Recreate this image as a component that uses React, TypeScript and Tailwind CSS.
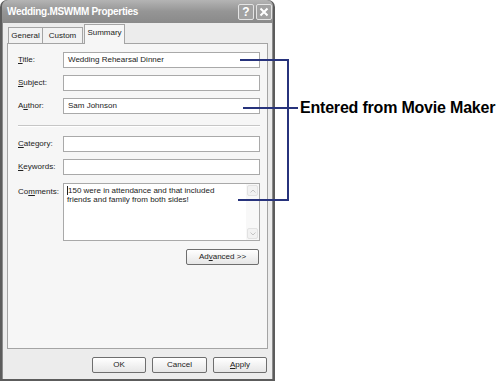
const FONT = "font-['Liberation_Sans',Arial,sans-serif]";

function Acc({ text, at }: { text: string; at: number }) {
  // label with an underlined accelerator letter
  return (
    <>
      {text.slice(0, at)}
      <span className="underline underline-offset-[1px]">{text[at]}</span>
      {text.slice(at + 1)}
    </>
  );
}

function Field({ label, at, value }: { label: string; at: number; value?: string }) {
  return (
    <div className="flex h-[16px] items-center">
      <div className="w-[45px] text-[8px] text-[#222]">
        <Acc text={label} at={at} />
      </div>
      <div className="flex h-[16px] flex-1 items-center border border-[#a9a9a9] bg-white pl-[4px] text-[8px] text-[#222]">
        {value}
      </div>
    </div>
  );
}

function WinButton({ children, className = "" }: { children: React.ReactNode; className?: string }) {
  return (
    <div
      className={`flex h-[16px] items-center justify-center rounded-[2px] border border-[#6e6e6e] bg-gradient-to-b from-white to-[#e6e6e6] text-[8px] text-[#222] ${className}`}
    >
      {children}
    </div>
  );
}

function Window() {
  return (
    <div className="flex h-[381px] w-[275px] shrink-0 flex-col rounded-t-[7px] bg-[#5c5c5c] px-[2px] pb-[2px]">
      {/* Title bar */}
      <div className="flex h-[23px] items-center rounded-t-[6px] bg-gradient-to-b from-[#b4b4b4] via-[#959595] to-[#8a8a8a] pl-[5px] pr-[1px]">
        <span className="flex-1 text-[10px] font-bold tracking-[-0.3px] text-white">Wedding.MSWMM Properties</span>
        <div className="flex gap-[2px]">
          <div className="flex h-[16px] w-[16px] items-center justify-center rounded-[2px] border border-[#e4e4e4] bg-[#a2a2a2] text-[12px] font-bold leading-none text-white">
            ?
          </div>
          <div className="flex h-[16px] w-[16px] items-center justify-center rounded-[2px] border border-[#e4e4e4] bg-[#a2a2a2]">
            <svg width="10" height="10" viewBox="0 0 10 10">
              <path d="M1.5 1.5 L8.5 8.5 M8.5 1.5 L1.5 8.5" stroke="white" strokeWidth="2" />
            </svg>
          </div>
        </div>
      </div>

      {/* Body */}
      <div className="flex flex-1 flex-col border-x border-[#8c8c8c] bg-[#ececec] px-[4px] pb-[5px]">
        {/* Tabs */}
        <div className="flex h-[20px] items-end pl-[1px] text-[8px] text-[#222]">
          <div className="flex h-[16px] w-[35px] items-center justify-center border border-b-0 border-[#a4a4a4] bg-[#f2f2f2]">General</div>
          <div className="flex h-[16px] w-[40px] items-center justify-center border border-b-0 border-l-0 border-[#a4a4a4] bg-[#f2f2f2]">Custom</div>
          <div className="relative z-10 -mb-px ml-px flex h-[20px] w-[41px] items-start justify-center border border-b-0 border-[#a4a4a4] bg-[#f6f6f6] pt-[2px]">
            Summary
          </div>
        </div>

        {/* Panel */}
        <div className="flex h-[306px] flex-col border border-[#a4a4a4] bg-[#f6f6f6] pl-[10px] pr-[7px] pt-[8px]">
          <div className="flex flex-col gap-[7px]">
            <Field label="Title:" at={0} value="Wedding Rehearsal Dinner" />
            <Field label="Subject:" at={0} />
            <Field label="Author:" at={1} value="Sam Johnson" />
          </div>
          <div className="mb-[9px] mt-[11px] h-[2px] border-t border-b border-t-[#c6c6c6] border-b-white" />
          <div className="flex flex-col gap-[7px]">
            <Field label="Category:" at={0} />
            <Field label="Keywords:" at={0} />
          </div>
          <div className="mt-[8px] flex">
            <div className="w-[45px] pt-[3px] text-[8px] text-[#222]">
              <Acc text="Comments:" at={2} />
            </div>
            <div className="flex h-[58px] flex-1 border border-[#a9a9a9] bg-white">
              <div className="flex-1 pl-[3px] pt-[2px] text-[8px] leading-[9px] text-[#222]">
                <span className="border-l border-[#222]">150 were in attendance and that included</span>
                <br />
                friends and family from both sides!
              </div>
              <div className="flex w-[13px] flex-col justify-between bg-[#f8f8f8] p-[1px]">
                <div className="flex h-[11px] items-center justify-center rounded-[2px] border border-[#e2e2e2] bg-[#f2f2f2]">
                  <svg width="6" height="4" viewBox="0 0 6 4">
                    <path d="M0.5 3.5 L3 1 L5.5 3.5" fill="none" stroke="#c4c4c4" strokeWidth="1" />
                  </svg>
                </div>
                <div className="flex h-[11px] items-center justify-center rounded-[2px] border border-[#e2e2e2] bg-[#f2f2f2]">
                  <svg width="6" height="4" viewBox="0 0 6 4">
                    <path d="M0.5 0.5 L3 3 L5.5 0.5" fill="none" stroke="#c4c4c4" strokeWidth="1" />
                  </svg>
                </div>
              </div>
            </div>
          </div>
          <div className="mt-[8px] flex justify-end pr-px">
            <WinButton className="w-[73px]">
              <span>
                Ad<span className="underline">v</span>anced &gt;&gt;
              </span>
            </WinButton>
          </div>
        </div>

        {/* Dialog buttons */}
        <div className="mt-[8px] flex justify-end gap-[6px] pr-px">
          <WinButton className="w-[54px]">OK</WinButton>
          <WinButton className="w-[55px]">Cancel</WinButton>
          <WinButton className="w-[54px]">
            <Acc text="Apply" at={0} />
          </WinButton>
        </div>
      </div>
    </div>
  );
}

export default function App() {
  return (
    <div className={`relative h-[382px] w-[500px] overflow-hidden bg-white ${FONT}`}>
      <div className="flex">
        <Window />
        <div className="whitespace-nowrap pl-[25px] pt-[98px] text-[16px] font-bold leading-[20px] tracking-[-0.2px] text-black">
          Entered from Movie Maker
        </div>
      </div>

      {/* Callout bracket */}
      <svg className="pointer-events-none absolute left-0 top-0" width="500" height="382">
        <g stroke="#27337c" strokeWidth="2" fill="none">
          <path d="M240 60 H288 V200 H238" />
          <path d="M243 108 H298" />
        </g>
      </svg>
    </div>
  );
}
